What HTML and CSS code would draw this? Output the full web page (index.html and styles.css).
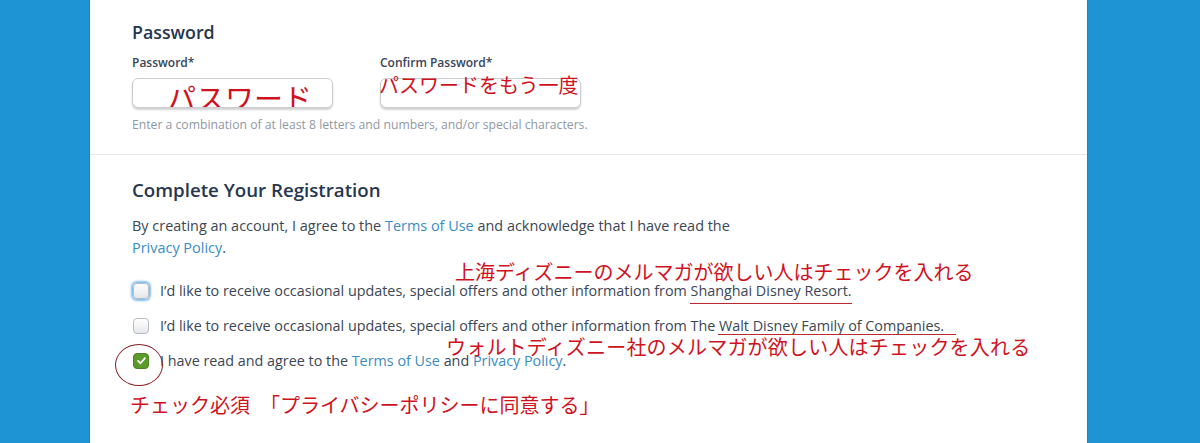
FILE: index.html
```html
<!DOCTYPE html>
<html lang="en">
<head>
<meta charset="utf-8">
<title>Password / Complete Your Registration</title>
<link rel="stylesheet" href="styles.css">
</head>
<body>
<div class="panel">
  <section class="sec sec-pw">
    <h2 class="title">Password</h2>
    <div class="fields">
      <div class="field">
        <div class="label">Password*</div>
        <div class="input"><span class="in-note">パスワード</span></div>
      </div>
      <div class="field">
        <div class="label">Confirm Password*</div>
        <div class="input"></div>
      </div>
    </div>
    <p class="help">Enter a combination of at least 8 letters and numbers, and/or special characters.</p>
  </section>
  <section class="sec sec-reg">
    <h2 class="title">Complete Your Registration</h2>
    <p class="para">By creating an account, I agree to the <span class="link">Terms of Use</span> and acknowledge that I have read the<br><span class="link">Privacy Policy</span>.</p>
    <div class="rows">
      <div class="row"><span class="cb focus"></span><span>I’d like to receive occasional updates, special offers and other information from Shanghai Disney Resort.</span></div>
      <div class="row"><span class="cb"></span><span>I’d like to receive occasional updates, special offers and other information from The Walt Disney Family of Companies.</span></div>
      <div class="row"><span class="cb checked"><svg viewBox="0 0 16 16" width="11" height="11"><path d="M3 8.5 L6.5 12 L13 4.5" fill="none" stroke="#fff" stroke-width="2.6" stroke-linecap="round" stroke-linejoin="round"/></svg></span><span>I have read and agree to the <span class="link">Terms of Use</span> and <span class="link">Privacy Policy</span>.</span></div>
    </div>
  </section>

  <div class="note note-pw2">パスワードをもう一度</div>
  <div class="note note-sh">上海ディズニーのメルマガが欲しい人はチェックを入れる</div>
  <div class="uline uline-sh"></div>
  <div class="uline uline-wd"></div>
  <div class="note note-wd">ウォルトディズニー社のメルマガが欲しい人はチェックを入れる</div>
  <div class="ring"></div>
  <div class="note note-req">チェック必須　「プライバシーポリシーに同意する」</div>
</div>
</body>
</html>
```
FILE: styles.css
```css
html, body {
  margin: 0;
  padding: 0;
}
body {
  background: #1f94d4;
  height: 443px;
  overflow: hidden;
  font-family: "Open Sans", "Noto Sans", sans-serif;
  color: #3b4656;
}
.panel {
  position: relative;
  margin-left: 90px;
  width: 997px;
  height: 443px;
  background: #fff;
  box-shadow: 1px 0 0 #1a86c2, -1px 0 0 #1a86c2;
}
.sec {
  padding: 0 42px;
}
.sec-pw {
  padding-top: 20px;
  height: 134px;
  border-bottom: 1px solid #e6e7e8;
}
.title {
  margin: 0;
  font-size: 17.8px;
  line-height: 24px;
  font-weight: 600;
  color: #253650;
}
.fields {
  display: flex;
  gap: 47px;
  margin-top: 11px;
}
.field {
  width: 201px;
}
.label {
  font-size: 12px;
  line-height: 16px;
  font-weight: 600;
  color: #384558;
}
.input {
  margin-top: 7px;
  height: 28px;
  border: 1px solid #c9cdd2;
  border-radius: 6px;
  box-shadow: 0 2px 2px rgba(0,0,0,0.18);
  overflow: hidden;
  background: #fff;
}
.in-note {
  display: block;
  padding-left: 34px;
  padding-top: 3px;
  font-family: "Noto Sans CJK JP", sans-serif;
  font-size: 29px;
  line-height: 30px;
  color: #d0121e;
}
.help {
  margin: 10px 0 0;
  font-size: 12.2px;
  line-height: 14px;
  color: #8f99a5;
}
.sec-reg {
  padding-top: 23px;
}
.sec-reg .title {
  font-size: 18.7px;
}
.para {
  margin: 13px 0 0;
  font-size: 14.45px;
  line-height: 22px;
  color: #3b4656;
}
.link {
  color: #3a8cc4;
}
.rows {
  margin-top: 14px;
}
.row {
  display: flex;
  align-items: center;
  gap: 11px;
  height: 35px;
  font-size: 14.35px;
  color: #3b4656;
}
.cb {
  flex: none;
  width: 16px;
  height: 16px;
  margin-left: 1px;
  border: 1px solid #b5bcc4;
  border-radius: 4px;
  background: linear-gradient(#ffffff, #e6e7e9);
  box-sizing: border-box;
  display: flex;
  align-items: center;
  justify-content: center;
}
.cb.focus {
  box-shadow: 0 0 2px 2px rgba(90,170,230,0.75);
}
.cb.checked {
  background: #5b9a2b;
  border-color: #4b8420;
}
.note {
  position: absolute;
  font-family: "Noto Sans CJK JP", sans-serif;
  font-size: 20px;
  line-height: 24px;
  color: #d0121e;
  white-space: nowrap;
}
.note-pw2 { left: 289px; top: 73px; }
.note-sh { left: 365px; top: 260px; }
.note-wd { left: 356px; top: 335px; letter-spacing: 0.2px; }
.note-req { left: 40px; top: 393px; }
.uline {
  position: absolute;
  height: 1px;
  background: #c0282e;
}
.uline-sh { left: 600px; top: 303px; width: 162px; }
.uline-wd { left: 628px; top: 334px; width: 238px; }
.ring {
  position: absolute;
  left: 25px;
  top: 344px;
  width: 46px;
  height: 40px;
  border: 1px solid #8a1c22;
  border-radius: 50%;
}
```
